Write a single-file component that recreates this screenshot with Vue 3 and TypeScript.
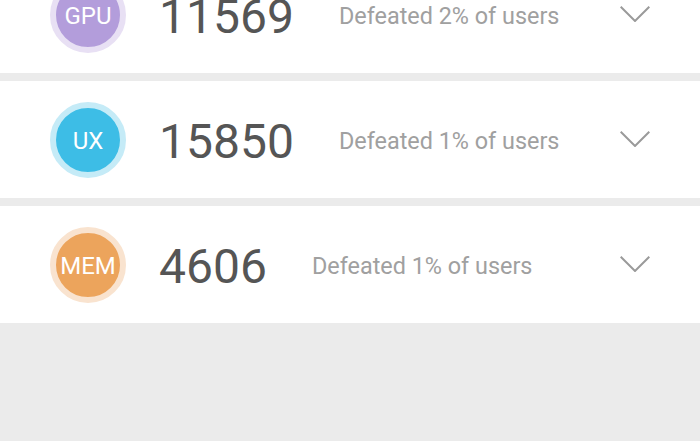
<script setup lang="ts">
interface Score {
  name: string
  value: number
  defeated: number
  color: string
  ring: string
}

const scores: Score[] = [
  { name: 'GPU', value: 11569, defeated: 2, color: '#b39ddb', ring: '#e8e0f4' },
  { name: 'UX', value: 15850, defeated: 1, color: '#3dbde6', ring: '#c5ebf7' },
  { name: 'MEM', value: 4606, defeated: 1, color: '#eca45c', ring: '#f9e3cf' },
]
</script>

<template>
  <div class="page">
    <div class="list">
      <div v-for="score in scores" :key="score.name" class="row">
        <div class="badge" :style="{ backgroundColor: score.color, borderColor: score.ring }">
          {{ score.name }}
        </div>
        <span class="value">{{ score.value }}</span>
        <span class="defeated">Defeated {{ score.defeated }}% of users</span>
        <svg class="chevron" width="30" height="16" viewBox="0 0 30 16" fill="none">
          <path d="M0.7 0.7L15 15L29.3 0.7" stroke="#9a9a9a" stroke-width="2" />
        </svg>
      </div>
    </div>
  </div>
</template>

<style>
html,
body {
  margin: 0;
  background: #ebebeb;
}
</style>

<style scoped>
.page {
  width: 700px;
  height: 441px;
  overflow: hidden;
  background: #ebebeb;
  font-family: Roboto, sans-serif;
}

.list {
  display: flex;
  flex-direction: column;
  gap: 8px;
  margin-top: -44px;
}

.row {
  display: flex;
  align-items: center;
  height: 117px;
  padding-left: 50px;
  background: #fff;
}

.badge {
  display: flex;
  align-items: center;
  justify-content: center;
  flex: none;
  box-sizing: border-box;
  width: 76px;
  height: 76px;
  padding-top: 3px;
  border: 6px solid;
  border-radius: 50%;
  font-size: 24px;
  color: #fff;
}

.value {
  margin-top: 4px;
  margin-left: 33px;
  font-size: 48px;
  color: #555;
}

.defeated {
  margin-top: 2px;
  margin-left: 45px;
  font-size: 23.4px;
  color: #a0a0a0;
}

.chevron {
  margin-left: auto;
  margin-right: 50px;
  margin-top: -1px;
}
</style>
